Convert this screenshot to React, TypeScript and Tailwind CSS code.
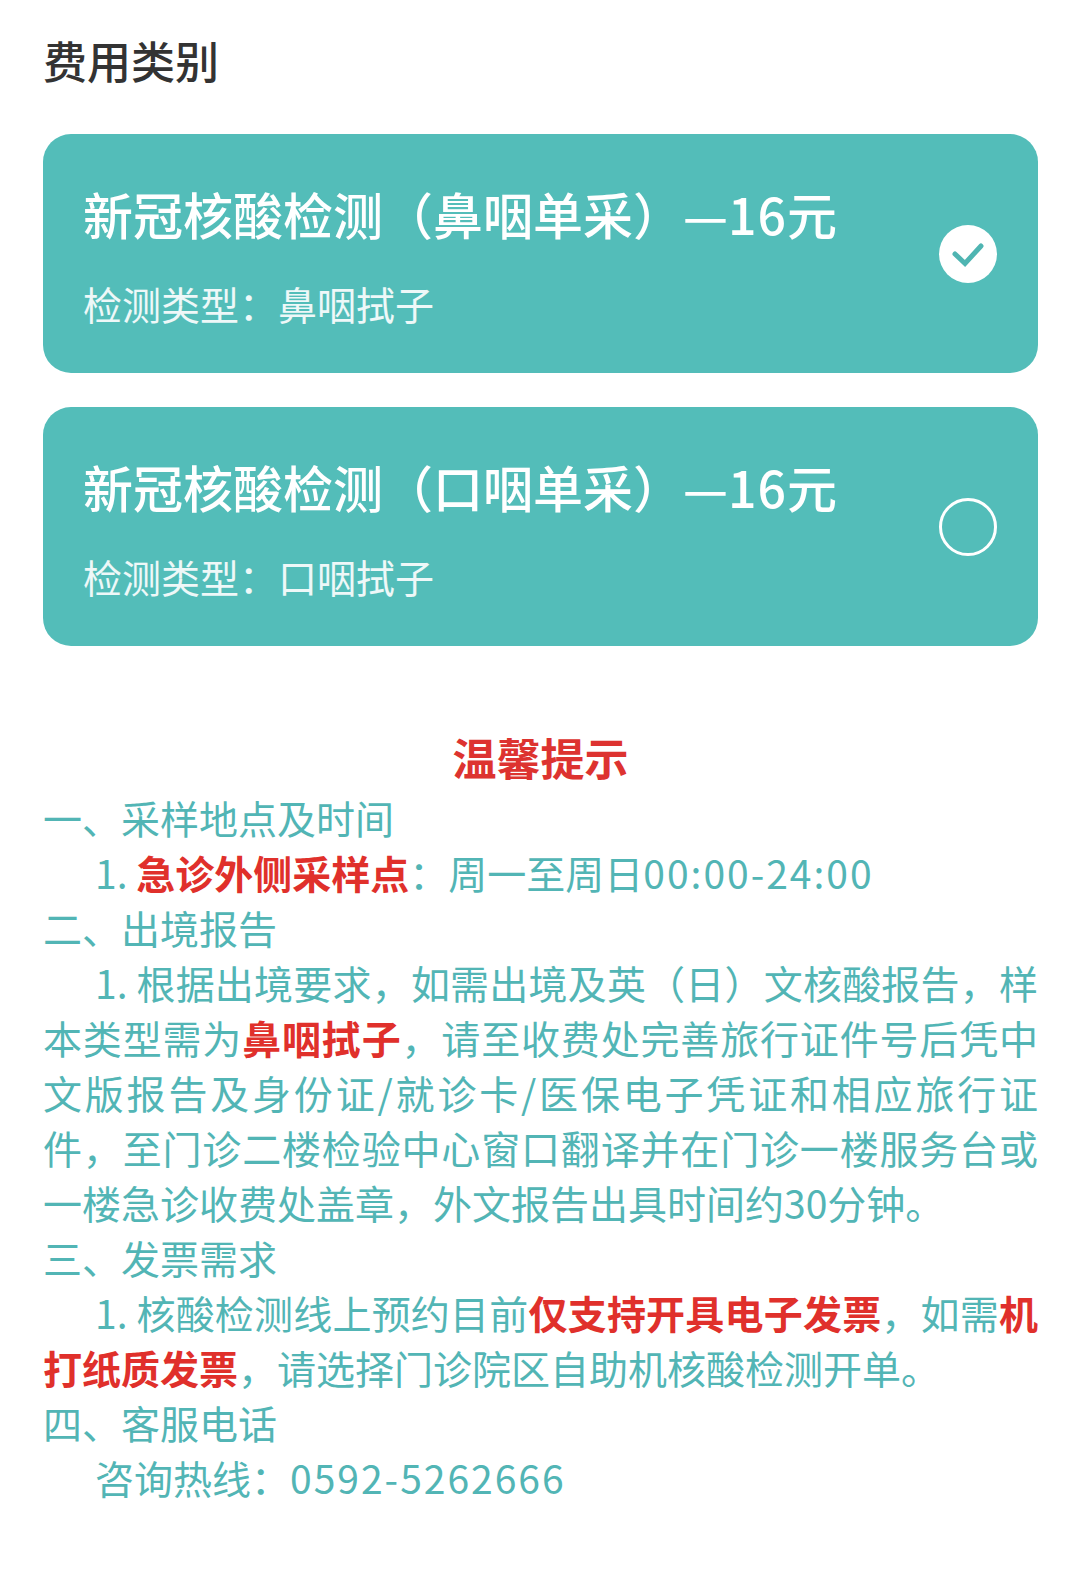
import type { ReactNode } from 'react';

const font = { fontFamily: '"Noto Sans CJK SC", "Noto Sans", sans-serif' };

interface Option {
    id: number;
    name: string;
    sample: string;
    checked: boolean;
}

const options: Option[] = [
    { id: 1, name: '新冠核酸检测（鼻咽单采）—', sample: '鼻咽拭子', checked: true },
    { id: 2, name: '新冠核酸检测（口咽单采）—', sample: '口咽拭子', checked: false },
];

function Radio({ checked }: { checked: boolean }) {
    if (checked) {
        return (
            <svg width="58" height="58" viewBox="0 0 58 58" className="shrink-0">
                <circle cx="29" cy="29" r="29" fill="#ffffff" />
                <polyline
                    points="16,29 26,38.5 42,21"
                    fill="none"
                    stroke="#4fb5b2"
                    strokeWidth="5"
                    strokeLinecap="round"
                    strokeLinejoin="miter"
                />
            </svg>
        );
    }
    return <div className="h-[58px] w-[58px] shrink-0 rounded-full border-[3px] border-white" />;
}

function OptionCard({ option }: { option: Option }) {
    return (
        <div className="flex h-[239px] items-center justify-between rounded-[28px] bg-[#53bdb9] pl-[40px] pr-[41px]">
            <div className="flex flex-col pt-[4px]">
                <div className="whitespace-nowrap text-[50px] font-medium leading-[60px] text-white">
                    {option.name}
                    <span className="tracking-[1px]">16</span>元
                </div>
                <div className="mt-[35px] whitespace-nowrap text-[39px] leading-[50px] text-white/90">
                    检测类型：{option.sample}
                </div>
            </div>
            <Radio checked={option.checked} />
        </div>
    );
}

function Red({ children }: { children: ReactNode }) {
    return <span className="font-bold text-[#e0302b]">{children}</span>;
}

// digits in the reference run a little wider than Noto's
function Num({ children }: { children: ReactNode }) {
    return <span className="tracking-[2px]">{children}</span>;
}

// one printed line of the notice; full lines get stretched edge to edge
function Line({ children, indent, full }: { children: ReactNode; indent?: boolean; full?: boolean }) {
    return (
        <div
            className={`whitespace-nowrap ${indent ? 'pl-[52px]' : ''} ${
                full ? 'text-justify [text-align-last:justify]' : ''
            }`}
        >
            {children}
        </div>
    );
}

export default function App() {
    return (
        <div className="min-h-[1573px] bg-white pl-[43px] pr-[42px] pt-[30px]" style={font}>
            <h1 className="text-[44px] font-medium leading-[60px] text-[#333333]">费用类别</h1>

            <div className="mt-[44px] flex flex-col gap-[34px]">
                {options.map((option) => (
                    <OptionCard key={option.id} option={option} />
                ))}
            </div>

            <h2 className="mt-[78px] text-center text-[44px] font-bold leading-[66px] text-[#dd3330]">温馨提示</h2>

            <div className="text-[39px] leading-[55px] text-[#52b5b5]">
                <Line>一、采样地点及时间</Line>
                <Line indent>
                    1. <Red>急诊外侧采样点</Red>：周一至周日<Num>00:00-24:00</Num>
                </Line>
                <Line>二、出境报告</Line>
                <Line indent full>
                    1. 根据出境要求，如需出境及英（日）文核酸报告，样
                </Line>
                <Line full>
                    本类型需为<Red>鼻咽拭子</Red>，请至收费处完善旅行证件号后凭中
                </Line>
                <Line full>文版报告及身份证/就诊卡/医保电子凭证和相应旅行证</Line>
                <Line full>件，至门诊二楼检验中心窗口翻译并在门诊一楼服务台或</Line>
                <Line>一楼急诊收费处盖章，外文报告出具时间约30分钟。</Line>
                <Line>三、发票需求</Line>
                <Line indent full>
                    1. 核酸检测线上预约目前<Red>仅支持开具电子发票</Red>，如需<Red>机</Red>
                </Line>
                <Line>
                    <Red>打纸质发票</Red>，请选择门诊院区自助机核酸检测开单。
                </Line>
                <Line>四、客服电话</Line>
                <Line indent>
                    咨询热线：<Num>0592-5262666</Num>
                </Line>
            </div>
        </div>
    );
}
